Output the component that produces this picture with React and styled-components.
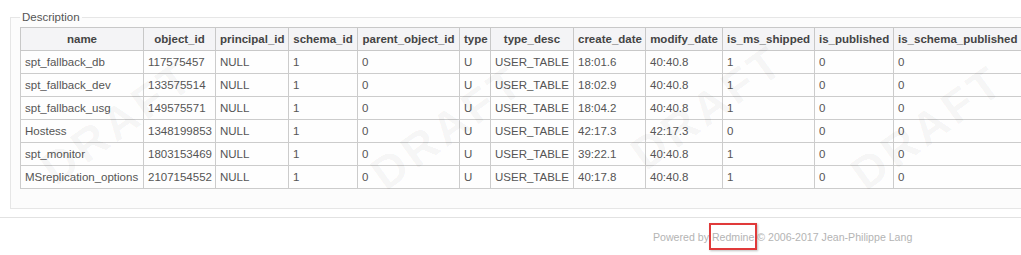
import React from 'react';
import styled, { createGlobalStyle } from 'styled-components';

const GlobalStyle = createGlobalStyle`
  html, body {
    margin: 0;
    padding: 0;
    background: #ffffff;
    overflow: hidden;
  }

  body {
    font-family: 'Liberation Sans', Arial, sans-serif;
    font-size: 11.5px;
    color: #505050;
  }
`;

const Page = styled.div`
  width: 1021px;
  height: 255px;
  overflow: hidden;
`;

const Content = styled.div`
  padding: 11px 0 8px 10px;
`;

const Box = styled.fieldset`
  position: relative;
  width: 1040px;
  margin: 0;
  padding: 3px 9px 19px 9px;
  border: 1px solid #e6e6e6;
  background: #fcfcfc;
  overflow: hidden;
`;

const Legend = styled.legend`
  padding: 0 2px;
  margin-left: 0;
  font-size: 11.5px;
  line-height: 13px;
  color: #555;
`;

const Table = styled.table`
  position: relative;
  border-collapse: collapse;
  table-layout: fixed;
  width: ${(p) => p.$width}px;
  background: transparent;
`;

const Th = styled.th`
  height: 14px;
  padding: 4px;
  border: 1px solid #c8c8c8;
  background: #f4f4f6;
  font-weight: bold;
  color: #444;
  text-align: center;
  white-space: nowrap;
  line-height: 14px;
`;

const Td = styled.td`
  height: 13.5px;
  padding: 4px;
  border: 1px solid #cccccc;
  background: rgba(255, 255, 255, 0.6);
  color: #555;
  white-space: nowrap;
  line-height: 14px;
  text-align: left;
`;

const Watermarks = styled.div`
  position: absolute;
  inset: 0;
  pointer-events: none;
  z-index: 1;
`;

const Mark = styled.span`
  position: absolute;
  font-family: 'Liberation Sans', Arial, sans-serif;
  font-size: 46px;
  line-height: 50px;
  font-weight: bold;
  letter-spacing: 4px;
  color: rgba(0, 0, 0, 0.04);
  transform: rotate(-36deg);
  transform-origin: left bottom;
`;

const Divider = styled.div`
  border-top: 1px solid #e2e2e2;
`;

const Footer = styled.div`
  padding: 13px 0 0 653px;
  font-size: 10.6px;
  color: #b4b4b4;
  line-height: 13px;
  white-space: nowrap;
`;

const Highlight = styled.span`
  position: relative;

  &::after {
    content: '';
    position: absolute;
    left: -3px;
    right: -3px;
    top: -8px;
    bottom: -7px;
    border: 2px solid #e03a3a;
    box-shadow: 1px 1px 2px rgba(0, 0, 0, 0.25);
  }
`;

const columns = [
  { key: 'name', width: 123 },
  { key: 'object_id', width: 72 },
  { key: 'principal_id', width: 73 },
  { key: 'schema_id', width: 69 },
  { key: 'parent_object_id', width: 102 },
  { key: 'type', width: 31 },
  { key: 'type_desc', width: 83 },
  { key: 'create_date', width: 72 },
  { key: 'modify_date', width: 77 },
  { key: 'is_ms_shipped', width: 92 },
  { key: 'is_published', width: 79 },
  { key: 'is_schema_published', width: 128 },
];

const tableWidth = columns.reduce((s, c) => s + c.width, 0);

const rows = [
  ['spt_fallback_db', '117575457', 'NULL', '1', '0', 'U', 'USER_TABLE', '18:01.6', '40:40.8', '1', '0', '0'],
  ['spt_fallback_dev', '133575514', 'NULL', '1', '0', 'U', 'USER_TABLE', '18:02.9', '40:40.8', '1', '0', '0'],
  ['spt_fallback_usg', '149575571', 'NULL', '1', '0', 'U', 'USER_TABLE', '18:04.2', '40:40.8', '1', '0', '0'],
  ['Hostess', '1348199853', 'NULL', '1', '0', 'U', 'USER_TABLE', '42:17.3', '42:17.3', '0', '0', '0'],
  ['spt_monitor', '1803153469', 'NULL', '1', '0', 'U', 'USER_TABLE', '39:22.1', '40:40.8', '1', '0', '0'],
  ['MSreplication_options', '2107154552', 'NULL', '1', '0', 'U', 'USER_TABLE', '40:17.8', '40:40.8', '1', '0', '0'],
];

// watermark spots (top-left of the unrotated word), relative to the fieldset
const marks = [
  { x: 50, y: 120 },
  { x: 380, y: 125 },
  { x: 640, y: 105 },
  { x: 860, y: 125 },
];

const App = () => {
  return (
    <Page>
      <GlobalStyle />
      <Content>
        <Box>
          <Legend>Description</Legend>
          <Table $width={tableWidth}>
            <colgroup>
              {columns.map((c) => (
                <col key={c.key} style={{ width: c.width }} />
              ))}
            </colgroup>
            <thead>
              <tr>
                {columns.map((c) => (
                  <Th key={c.key}>{c.key}</Th>
                ))}
              </tr>
            </thead>
            <tbody>
              {rows.map((r) => (
                <tr key={r[0]}>
                  {r.map((v, i) => (
                    <Td key={i}>{v}</Td>
                  ))}
                </tr>
              ))}
            </tbody>
          </Table>
          <Watermarks aria-hidden="true">
            {marks.map((m, i) => (
              <Mark key={i} style={{ left: m.x, top: m.y }}>
                DRAFT
              </Mark>
            ))}
          </Watermarks>
        </Box>
      </Content>
      <Divider />
      <Footer>
        Powered by <Highlight>Redmine</Highlight> © 2006-2017 Jean-Philippe Lang
      </Footer>
    </Page>
  );
};

export default App;
